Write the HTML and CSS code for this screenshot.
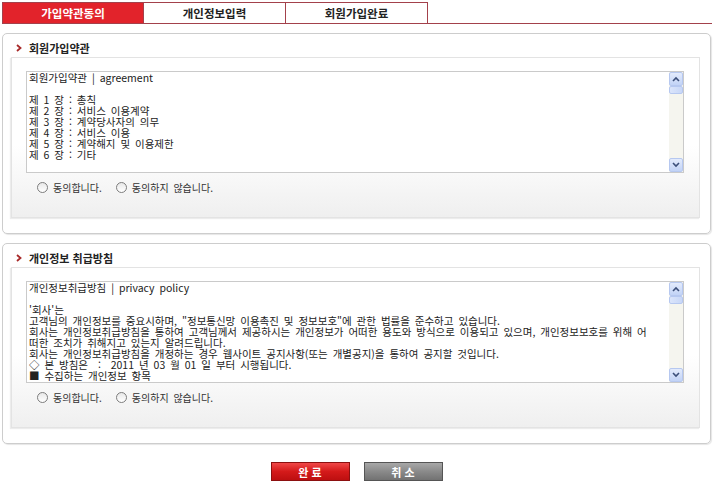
FILE: index.html
```html
<!DOCTYPE html>
<html lang="ko">
<head>
  <meta charset="UTF-8">
  <meta name="viewport" content="width=device-width, initial-scale=1.0">
  <title>회원가입 - 약관동의</title>
  <link rel="stylesheet" href="styles.css">
</head>
<body>
  <div class="wrap">
    <div class="tabs">
      <div class="tab on">가입약관동의</div>
      <div class="tab">개인정보입력</div>
      <div class="tab">회원가입완료</div>
      <div class="tab-rest"></div>
    </div>

    <div class="panel">
      <h2 class="title"><svg class="arrow" width="6" height="8" viewBox="0 0 6 8"><path d="M1 1 L4.5 4 L1 7" fill="none" stroke="#a82a2a" stroke-width="1.8"/></svg>회원가입약관</h2>
      <div class="inner">
        <div class="textbox">
          <div class="text">회원가입약관 | agreement

제 1 장 : 총칙
제 2 장 : 서비스 이용계약
제 3 장 : 계약당사자의 의무
제 4 장 : 서비스 이용
제 5 장 : 계약해지 및 이용제한
제 6 장 : 기타</div>
          <div class="scroll">
            <div class="sbtn"><svg width="8" height="6" viewBox="0 0 8 6"><path d="M1 5 L4 2 L7 5" fill="none" stroke="#3c4f7a" stroke-width="1.6"/></svg></div>
            <div class="thumb"></div>
            <div class="track"></div>
            <div class="sbtn"><svg width="8" height="6" viewBox="0 0 8 6"><path d="M1 1 L4 4 L7 1" fill="none" stroke="#3c4f7a" stroke-width="1.6"/></svg></div>
          </div>
        </div>
        <div class="radios">
          <label class="radio"><span class="dot"></span>동의합니다.</label>
          <label class="radio"><span class="dot"></span>동의하지 않습니다.</label>
        </div>
      </div>
    </div>

    <div class="panel">
      <h2 class="title"><svg class="arrow" width="6" height="8" viewBox="0 0 6 8"><path d="M1 1 L4.5 4 L1 7" fill="none" stroke="#a82a2a" stroke-width="1.8"/></svg>개인정보 취급방침</h2>
      <div class="inner">
        <div class="textbox">
          <div class="text">개인정보취급방침 | privacy policy

'회사'는
고객님의 개인정보를 중요시하며, "정보통신망 이용촉진 및 정보보호"에 관한 법률을 준수하고 있습니다.
회사는 개인정보취급방침을 통하여 고객님께서 제공하시는 개인정보가 어떠한 용도와 방식으로 이용되고 있으며, 개인정보보호를 위해 어
떠한 조치가 취해지고 있는지 알려드립니다.
회사는 개인정보취급방침을 개정하는 경우 웹사이트 공지사항(또는 개별공지)을 통하여 공지할 것입니다.
◇ 본 방침은  :  2011 년 03 월 01 일 부터 시행됩니다.
■ 수집하는 개인정보 항목</div>
          <div class="scroll">
            <div class="sbtn"><svg width="8" height="6" viewBox="0 0 8 6"><path d="M1 5 L4 2 L7 5" fill="none" stroke="#3c4f7a" stroke-width="1.6"/></svg></div>
            <div class="thumb"></div>
            <div class="track"></div>
            <div class="sbtn"><svg width="8" height="6" viewBox="0 0 8 6"><path d="M1 1 L4 4 L7 1" fill="none" stroke="#3c4f7a" stroke-width="1.6"/></svg></div>
          </div>
        </div>
        <div class="radios">
          <label class="radio"><span class="dot"></span>동의합니다.</label>
          <label class="radio"><span class="dot"></span>동의하지 않습니다.</label>
        </div>
      </div>
    </div>

    <div class="btns">
      <button class="btn ok">완 료</button>
      <button class="btn cancel">취 소</button>
    </div>
  </div>
</body>
</html>
```

FILE: styles.css
```css
body {
  margin: 0;
  padding: 2px 0 0 2px;
  font-family: "Noto Sans CJK KR", "Noto Sans", sans-serif;
  color: #333;
  background-color: #fff;
}
.wrap {
  width: 710px;
}
.tabs {
  display: flex;
  height: 22px;
}
.tab {
  width: 142px;
  box-sizing: border-box;
  border: 1px solid #a3414b;
  border-left: none;
  text-align: center;
  font-size: 11.5px;
  font-weight: bold;
  line-height: 20px;
  color: #222;
  background-color: #fff;
}
.tab.on {
  border-left: 1px solid #a3414b;
  background-color: #e2232b;
  color: #fff;
}
.tab-rest {
  flex: 1;
  border-bottom: 1px solid #a3414b;
}
.panel {
  width: 709px;
  box-sizing: border-box;
  margin-top: 9px;
  padding: 5px 10px 15px 8px;
  border: 1px solid #cdcdcd;
  border-radius: 5px;
  box-shadow: 1px 1px 1px #e6e6e6;
}
.title {
  margin: 0;
  height: 18px;
  line-height: 18px;
  font-size: 11px;
  font-weight: bold;
  color: #222;
  display: flex;
  align-items: center;
}
.arrow {
  margin: 0 7px 0 5px;
}
.inner {
  padding: 13px 15px 16px 14px;
  border: 1px solid #e3e3e3;
  background: linear-gradient(#fff 0%, #fff 55%, #efefef 100%);
  box-shadow: -1px 1px 1px #ececec;
}
.textbox {
  display: flex;
  height: 102px;
  box-sizing: border-box;
  border: 1px solid #cacaca;
  background-color: #fff;
}
.text {
  flex: 1;
  white-space: pre;
  padding: 0 2px;
  font-size: 10.5px;
  line-height: 11px;
  word-spacing: 2px;
  color: #222;
}
.scroll {
  width: 14px;
  display: flex;
  flex-direction: column;
  background-color: #f5f5ef;
}
.sbtn {
  height: 14px;
  box-sizing: border-box;
  border: 1px solid #b6c8f0;
  border-radius: 2px;
  background: linear-gradient(#e3ebfc, #c2d3f6);
  display: flex;
  align-items: center;
  justify-content: center;
}
.thumb {
  height: 8px;
  box-sizing: border-box;
  border: 1px solid #b6c8f0;
  border-radius: 2px;
  background: linear-gradient(90deg, #dbe5fb, #c8d7f7);
}
.track {
  flex: 1;
}
.radios {
  display: flex;
  align-items: center;
  height: 28px;
  padding-left: 11px;
  gap: 14px;
}
.radio {
  display: flex;
  align-items: center;
  gap: 5px;
  font-size: 10px;
  word-spacing: 2px;
  color: #333;
}
.dot {
  width: 9px;
  height: 9px;
  border: 1px solid #7d7d7d;
  border-radius: 50%;
  background: linear-gradient(#e8e8e8, #fff);
}
.btns {
  width: 709px;
  display: flex;
  justify-content: center;
  gap: 14px;
  margin-top: 18px;
}
.btn {
  width: 79px;
  height: 19px;
  padding: 0;
  font-family: "Noto Sans CJK KR", sans-serif;
  font-size: 11px;
  font-weight: bold;
  color: #fff;
  cursor: pointer;
}
.ok {
  border: 1px solid #8c1010;
  background: linear-gradient(#f04848, #d41a1a 50%, #bd0f10);
}
.cancel {
  border: 1px solid #555;
  background: linear-gradient(#a8a8a8, #8a8a8a 50%, #727272);
}
```
